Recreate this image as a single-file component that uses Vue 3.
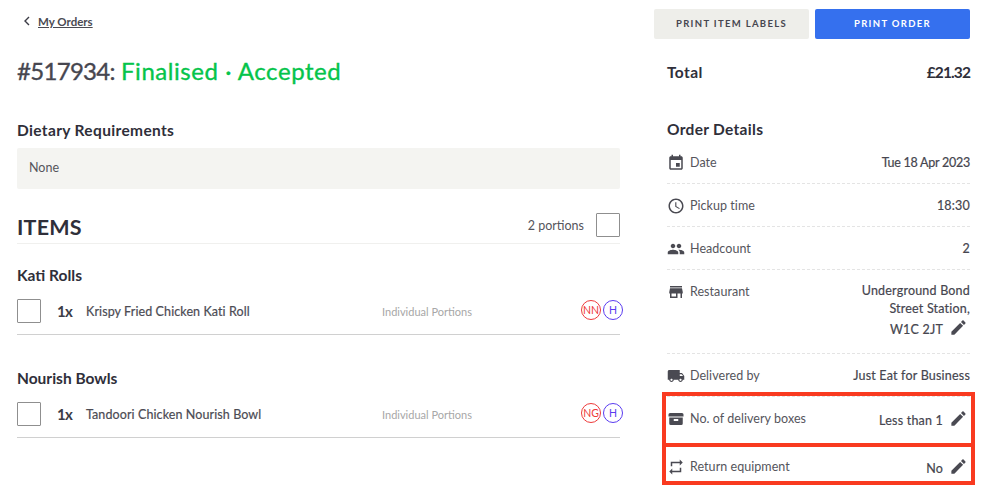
<script setup>
const paths = {
  event: 'M17 12h-5v5h5v-5zM16 1v2H8V1H6v2H5c-1.11 0-1.99.9-1.99 2L3 19c0 1.1.89 2 2 2h14c1.1 0 2-.9 2-2V5c0-1.1-.9-2-2-2h-1V1h-2zm3 18H5V8h14v11z',
  clock: 'M11.99 2C6.47 2 2 6.48 2 12s4.47 10 9.99 10C17.52 22 22 17.52 22 12S17.52 2 11.99 2zM12 20c-4.42 0-8-3.58-8-8s3.58-8 8-8 8 3.58 8 8-3.58 8-8 8zm.5-13H11v6l5.25 3.15.75-1.23-4.5-2.67z',
  people: 'M16 11c1.66 0 2.99-1.34 2.99-3S17.66 5 16 5c-1.66 0-3 1.34-3 3s1.34 3 3 3zm-8 0c1.66 0 2.99-1.34 2.99-3S9.66 5 8 5C6.34 5 5 6.34 5 8s1.34 3 3 3zm0 2c-2.33 0-7 1.17-7 3.5V19h14v-2.5c0-2.33-4.67-3.5-7-3.5zm8 0c-.29 0-.62.02-.97.05 1.16.84 1.97 1.97 1.97 3.45V19h6v-2.5c0-2.33-4.67-3.5-7-3.5z',
  store: 'M20 4H4v2h16V4zm1 10v-2l-1-5H4l-1 5v2h1v6h10v-6h4v6h2v-6h1zm-9 4H6v-4h6v4z',
  truck: 'M20 8h-3V4H3c-1.1 0-2 .9-2 2v11h2c0 1.66 1.34 3 3 3s3-1.34 3-3h6c0 1.66 1.34 3 3 3s3-1.34 3-3h2v-5l-3-4zM6 18.5c-.83 0-1.5-.67-1.5-1.5s.67-1.5 1.5-1.5 1.5.67 1.5 1.5-.67 1.5-1.5 1.5zm13.5-9l1.96 2.5H17V9.5h2.5zm-1.5 9c-.83 0-1.5-.67-1.5-1.5s.67-1.5 1.5-1.5 1.5.67 1.5 1.5-.67 1.5-1.5 1.5z',
  box: 'M4 4h16a2 2 0 0 1 2 2v2.5H2V6a2 2 0 0 1 2-2zM3 10h18v8a2 2 0 0 1-2 2H5a2 2 0 0 1-2-2zM9 12v2.5h6V12z',
  repeat: 'M7 7h10v3l4-4-4-4v3H5v6h2V7zm10 10H7v-3l-4 4 4 4v-3h12v-6h-2v4z',
  edit: 'M3 17.25V21h3.75L17.81 9.94l-3.75-3.75L3 17.25zM20.71 7.04c.39-.39.39-1.02 0-1.41l-2.34-2.34c-.39-.39-1.02-.39-1.41 0l-1.83 1.83 3.75 3.75 1.83-1.83z'
}
const sections = [
  { title: 'Kati Rolls', item: 'Krispy Fried Chicken Kati Roll', tag: 'NN' },
  { title: 'Nourish Bowls', item: 'Tandoori Chicken Nourish Bowl', tag: 'NG' }
]
const rows = [
  { icon: 'event', label: 'Date', value: ['Tue 18 Apr 2023'], tight: true },
  { icon: 'clock', label: 'Pickup time', value: ['18:30'] },
  { icon: 'people', label: 'Headcount', value: ['2'] },
  { icon: 'store', label: 'Restaurant', value: ['Underground Bond', 'Street Station,', 'W1C 2JT'], edit: true },
  { icon: 'truck', label: 'Delivered by', value: ['Just Eat for Business'] },
  { icon: 'box', label: 'No. of delivery boxes', value: ['Less than 1'], edit: true },
  { icon: 'repeat', label: 'Return equipment', value: ['No'], edit: true }
]
</script>

<template>
  <div class="page">
    <main class="left">
      <a class="back">
        <svg width="8" height="10" viewBox="0 0 8 10"><path d="M6 1 2 5l4 4" fill="none" stroke="#3c3c46" stroke-width="1.4"/></svg>
        <span>My Orders</span>
      </a>
      <h1><span class="num">#517934:</span> <span class="green">Finalised · Accepted</span></h1>
      <h2 class="diet">Dietary Requirements</h2>
      <div class="none">None</div>
      <div class="items-head">
        <h2 class="items">ITEMS</h2>
        <div class="portions"><span>2 portions</span><i class="check"></i></div>
      </div>
      <section v-for="s in sections" :key="s.title" class="section">
        <h3>{{ s.title }}</h3>
        <div class="item">
          <i class="check"></i>
          <b class="qty">1x</b>
          <span class="name">{{ s.item }}</span>
          <span class="kind">Individual Portions</span>
          <span class="tags">
            <em class="tag red">{{ s.tag }}</em>
            <em class="tag blue">H</em>
          </span>
        </div>
      </section>
    </main>
    <aside class="right">
      <div class="buttons">
        <button class="btn grey">PRINT ITEM LABELS</button>
        <button class="btn blue-btn">PRINT ORDER</button>
      </div>
      <div class="info">
        <div class="total"><span>Total</span><span class="sum">£21.32</span></div>
        <h2 class="details">Order Details</h2>
        <div v-for="r in rows" :key="r.label" class="row" :class="{ 'row-edit': r.edit }">
          <div class="label">
            <svg width="18" height="18" viewBox="0 0 24 24"><path :d="paths[r.icon]" fill="#4a4a52"/></svg>
            <span>{{ r.label }}</span>
          </div>
          <div class="value" :class="{ tight: r.tight }">
            <div v-for="(v, i) in r.value" :key="v" class="line" :class="{ 'line-pen': r.edit && i === r.value.length - 1 }">
              <span>{{ v }}</span>
              <svg v-if="r.edit && i === r.value.length - 1" class="pen" width="19" height="19" viewBox="0 0 24 24"><path :d="paths.edit" fill="#4a4a52"/></svg>
            </div>
          </div>
        </div>
      </div>
    </aside>
    <div class="mark mark1"></div>
    <div class="mark mark2"></div>
  </div>
</template>

<style scoped>
.page {
  position: relative;
  width: 982px;
  height: 486px;
  overflow: hidden;
  background: #fff;
  display: flex;
  font-family: Lato, "Open Sans", sans-serif;
  color: #2f2f3a;
}
.left { width: 603px; margin-left: 17px; flex: none; }
.right { margin-left: 34px; width: 316px; flex: none; }
.back { display: flex; align-items: center; gap: 7px; height: 14px; margin: 14px 0 0 6px; font-size: 11.5px; font-weight: 700; color: #4a4a52; }
.back span { text-decoration: underline; }
h1 { margin: 27px 0 0; font-size: 24px; line-height: 32px; font-weight: 400; color: #46464f; -webkit-text-stroke: 0.35px; white-space: nowrap; }
.num { letter-spacing: -0.7px; }
.green { color: #05c44b; letter-spacing: 0.55px; }
h2, h3 { margin: 0; font-weight: 700; color: #2f2f3a; }
.diet { margin-top: 33px; font-size: 15.5px; line-height: 20px; letter-spacing: 0.35px; }
.none { margin-top: 8px; height: 41px; line-height: 40px; padding-left: 12px; background: #f4f4f1; border-radius: 2px; font-size: 12.5px; color: #55555c; }
.items-head { display: flex; justify-content: space-between; align-items: flex-start; margin-top: 24px; padding-bottom: 2px; border-bottom: 1px solid #f0f0ee; }
.items { font-size: 21.5px; line-height: 28px; letter-spacing: 0.2px; }
.portions { display: flex; align-items: center; gap: 12px; font-size: 12.5px; color: #55555c; }
.check { display: block; width: 22px; height: 22px; border: 1px solid #8f8f8f; border-radius: 1px; background: #fff; flex: none; }
.section { height: 103px; }
.section:first-of-type { margin-top: 21px; }
.section h3 { font-size: 15.5px; line-height: 20px; }
.item { display: flex; align-items: center; margin-top: 14px; padding-bottom: 11px; border-bottom: 1px solid #d0d0d0; }
.qty { width: 29px; flex: none; margin-left: 16px; font-size: 15px; letter-spacing: -0.6px; color: #3c3c46; }
.name { width: 296px; flex: none; font-size: 12.5px; letter-spacing: 0.1px; color: #4c4c54; -webkit-text-stroke: 0.2px; }
.kind { width: 199px; flex: none; font-size: 11px; color: #a7a7a7; }
.tags { display: flex; gap: 2px; flex: none; margin-top: -2px; }
.tag { width: 18px; height: 18px; border-radius: 50%; border: 1px solid; display: flex; align-items: center; justify-content: center; font-style: normal; font-size: 10.5px; }
.red { color: #ee3a3a; }
.blue { color: #5a3cf0; }
.buttons { display: flex; gap: 6px; margin: 9px 0 0; width: 316px; }
.btn { width: 155px; height: 30px; border: 0; border-radius: 2px; font-family: inherit; font-size: 9.5px; font-weight: 700; letter-spacing: 1.33px; padding: 0 0 1px; }
.grey { background: #eeeeea; color: #46464f; }
.blue-btn { background: #3570ee; color: #fff; }
.info { margin-left: 13px; width: 303px; }
.total { display: flex; justify-content: space-between; margin-top: 23px; font-size: 15.5px; line-height: 20px; font-weight: 700; letter-spacing: 0.4px; color: #2f2f3a; }
.sum { letter-spacing: -0.9px; }
.details { margin: 37px 0 2px; font-size: 15.5px; line-height: 20px; letter-spacing: 0.3px; }
.row { display: flex; justify-content: space-between; align-items: flex-start; padding: 12px 0 11px; min-height: 19px; border-bottom: 1px dashed #e4e4e4; font-size: 12.5px; color: #55555c; }
.row-edit { min-height: 24px; }
.row:last-child { border-bottom: 0; }
.label { display: flex; align-items: center; gap: 5px; line-height: 19px; height: 19px; letter-spacing: 0.05px; }
.value { text-align: right; color: #46464f; letter-spacing: 0.2px; -webkit-text-stroke: 0.2px; }
.tight { letter-spacing: -0.25px; }
.line { display: flex; justify-content: flex-end; align-items: center; line-height: 18px; }
.line-pen { height: 24px; }
.row:not(.row-edit) .line { line-height: 19px; }
.pen { flex: none; margin: -5px 2.5px 0 5.5px; }
.mark { position: absolute; left: 662px; width: 313px; box-sizing: border-box; border: 4px solid #f93a20; }
.mark1 { top: 392px; height: 55px; }
.mark2 { top: 443px; height: 42px; }
</style>
